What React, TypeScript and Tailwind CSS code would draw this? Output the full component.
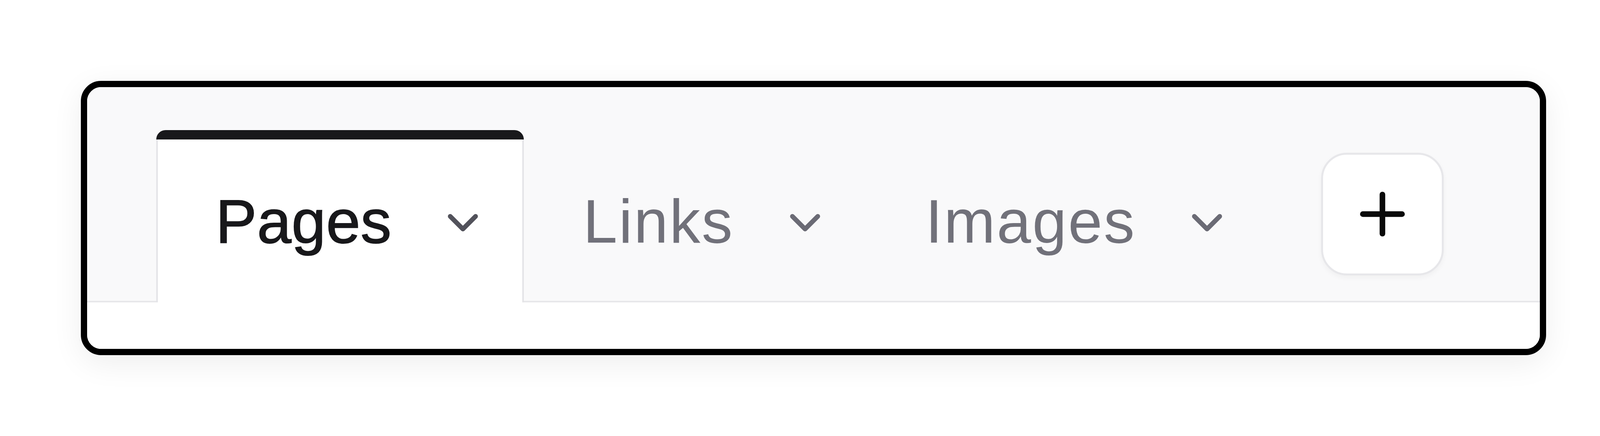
import { ChevronDown, Plus } from 'lucide-react';

const TABS = [
  { label: 'Pages', active: true },
  { label: 'Links', active: false },
  { label: 'Images', active: false },
];

function Tab({ label, active }: { label: string; active: boolean }) {
  return (
    <div className={`relative flex flex-col h-[441px] ${active ? 'z-10' : ''}`}>
      {/* Active indicator bar */}
      <div className={`h-[24px] rounded-t-[26px] ${active ? 'bg-[#18181b]' : 'bg-transparent'}`} />
      <div
        className={`flex flex-1 items-center gap-[117px] pl-[148px] pr-[87px] border-x-[4px] ${
          active ? 'bg-white border-[#e4e4e7]' : 'border-transparent'
        }`}
      >
        <span
          className={`text-[158px] leading-none ${
            active
              ? 'tracking-[0.5px] text-[#18181b] [-webkit-text-stroke:2px_#18181b]'
              : 'tracking-[3.5px] text-[#71717a]'
          }`}
        >
          {label}
        </span>
        <ChevronDown
          size={130}
          strokeWidth={2.2}
          className={`mt-[8px] ${active ? 'text-[#52525b]' : 'text-[#6b6b75]'}`}
        />
      </div>
    </div>
  );
}

export default function App() {
  return (
    <div className="w-[4164px] h-[1116px] bg-white pt-[207px] pl-[207px] font-['Liberation_Sans',Arial,sans-serif]">
      <div className="w-[3751px] h-[702px] flex flex-col overflow-hidden rounded-[52px] border-[16px] border-black bg-white shadow-[0_20px_80px_rgba(0,0,0,0.07)]">
        {/* Tab bar */}
        <div className="bg-[#f9f9fa] border-b-[4px] border-[#e7e7ea] pt-[110px] pl-[177px]">
          <div className="flex items-center -mb-[4px]">
            {TABS.map((tab) => (
              <Tab key={tab.label} label={tab.label} active={tab.active} />
            ))}
            <button className="ml-[136px] mb-[12px] flex h-[314px] w-[314px] items-center justify-center rounded-[66px] border-[5px] border-[#e7e7ea] bg-white shadow-[0_6px_14px_rgba(0,0,0,0.04)]">
              <Plus size={172} strokeWidth={2} className="text-[#0a0a0a]" />
            </button>
          </div>
        </div>
        <div className="flex-1 bg-white" />
      </div>
    </div>
  );
}
